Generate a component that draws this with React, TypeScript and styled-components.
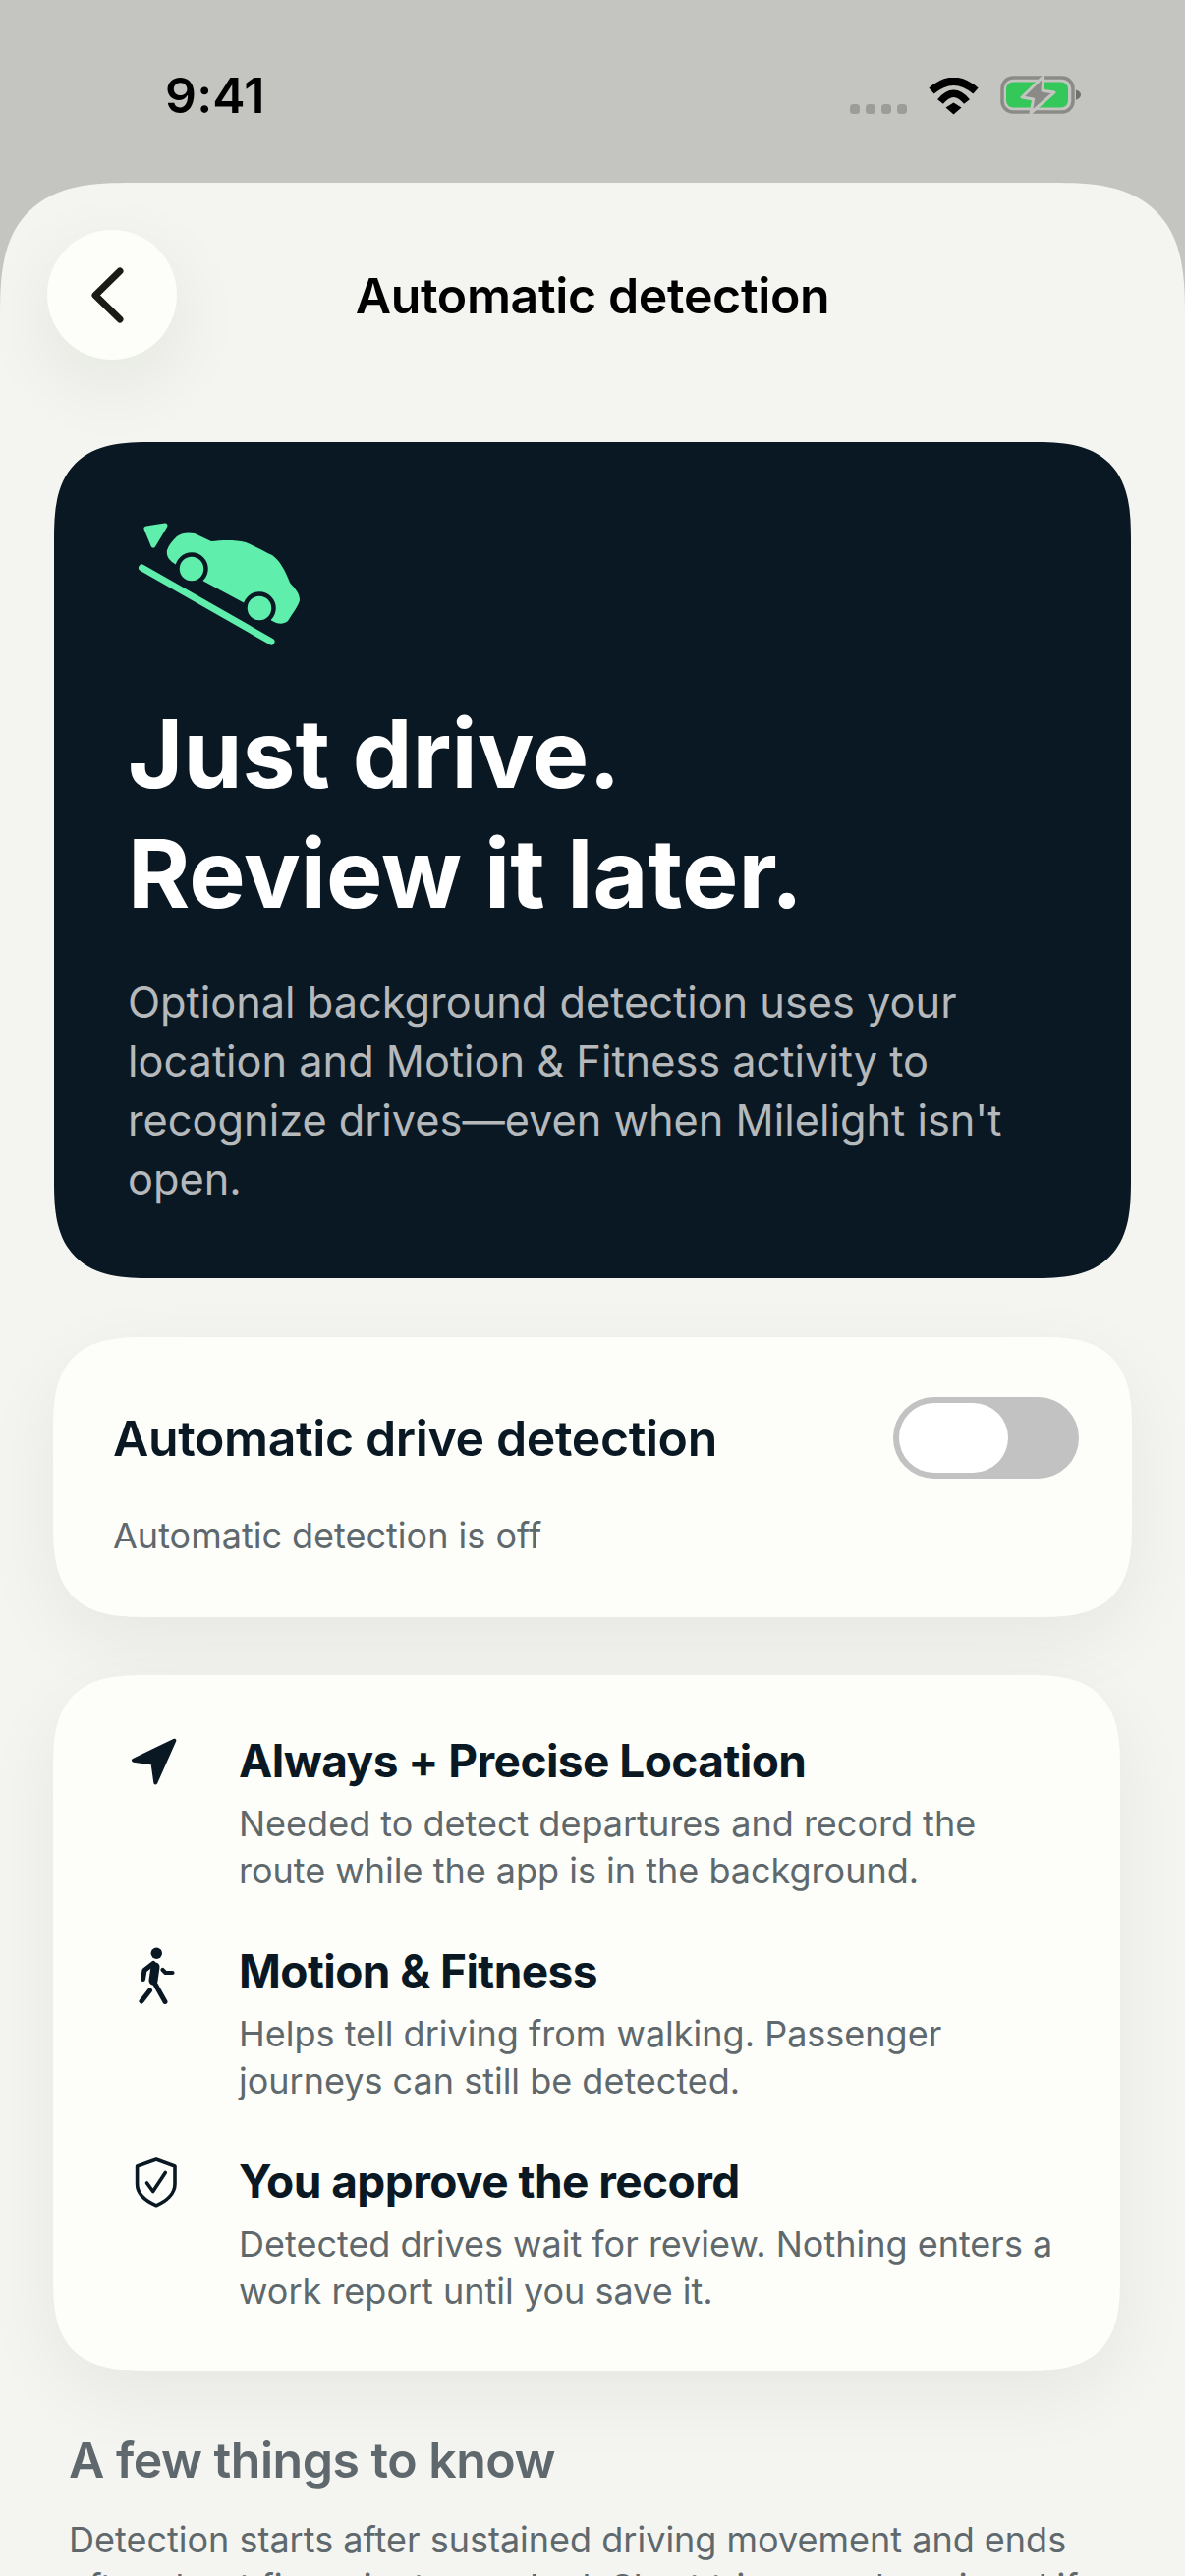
import React from "react";
import styled, { createGlobalStyle } from "styled-components";

const Global = createGlobalStyle`
  html, body { margin: 0; padding: 0; width: 1206px; height: 2622px; overflow: hidden; background: #c4c5c0; }
  * { box-sizing: border-box; }
  body { font-family: Inter, "Liberation Sans", sans-serif; -webkit-font-smoothing: antialiased; }
`;

const Screen = styled.div`
  width: 1206px; height: 2622px; overflow: hidden; background: #c4c5c0;
  display: flex; flex-direction: column;
`;
const StatusBar = styled.div`
  height: 186px; flex: none; display: flex; justify-content: space-between; align-items: flex-start;
  padding: 77px 106px 0 168px;
`;
const Clock = styled.div`
  font-size: 50px; font-weight: 600; line-height: 40px; color: #000; letter-spacing: 0.2px;
`;
const StatusIcons = styled.div`
  display: flex; align-items: flex-end; height: 39px; margin-top: 1px;
`;
const Dots = styled.div`
  display: flex; gap: 6px; margin-right: 22px; margin-bottom: 1px;
`;
const Dot = styled.span`
  width: 10px; height: 10px; border-radius: 3.5px; background: #9c9d98;
`;
const Wifi = styled.svg`
  width: 51px; height: 38px; margin-right: 22px; display: block;
`;
const Battery = styled.svg`
  width: 82px; height: 40px; display: block;
`;
const Sheet = styled.div`
  flex: 1; background: #f4f5f0; border-radius: 135px 135px 0 0; corner-shape: superellipse(1.5); padding: 48px 54px 0;
`;
const Header = styled.div`
  display: grid; grid-template-columns: 132px 1fr 132px; align-items: center; margin-left: -6px; margin-right: -6px;
`;
const BackButton = styled.button`
  width: 132px; height: 132px; border-radius: 50%; border: 0; background: #fdfef9; padding: 0;
  display: flex; align-items: center; justify-content: center;
  box-shadow: 0 24px 80px rgba(20, 25, 20, 0.07);
`;
const Title = styled.h1`
  margin: 0; text-align: center; font-size: 50px; line-height: 60px; font-weight: 600; color: #000; letter-spacing: -0.35px;
  position: relative; top: 1px;
`;
const Hero = styled.section`
  margin-top: 84px; margin-left: 1px; margin-right: 1px; background: #0a1824; border-radius: 100px; corner-shape: superellipse(1.5); padding: 50px 75px 71px;
`;
const CarIcon = styled.svg`
  display: block; width: 240px; height: 180px; margin-left: -20px;
`;
const Headline = styled.h2`
  margin: 26px 0 0; color: #fff; font-size: 96.5px; line-height: 122px; font-weight: 700; letter-spacing: 0;
`;
const HeroBody = styled.p`
  margin: 40px 0 0; color: #b5b9bb; font-size: 43.3px; line-height: 60px; font-weight: 400;
`;
const ToggleCard = styled.section`
  margin-top: 60px; background: #fdfef9; border-radius: 95px; corner-shape: superellipse(1.5); padding: 61px 54px 59px 61px;
  box-shadow: 0 24px 80px rgba(20, 25, 20, 0.06);
`;
const ToggleRow = styled.div`
  display: flex; align-items: center; justify-content: space-between;
`;
const CardTitle = styled.div`
  font-size: 50px; line-height: 60px; font-weight: 600; color: #0a1824; letter-spacing: -0.38px;
`;
const Subtle = styled.div`
  margin-top: 34px; font-size: 36px; line-height: 48px; color: #5f686c;
`;
const Toggle = styled.div`
  width: 189px; height: 83px; border-radius: 42px; background: #c2c2c2; padding: 6px; flex: none;
`;
const Knob = styled.div`
  width: 111px; height: 71px; border-radius: 36px; background: #fff;
`;
const InfoCard = styled.section`
  margin-top: 59px; margin-right: 12px; background: #fdfef9; border-radius: 95px; corner-shape: superellipse(1.5); padding: 57px 61px 57px 62px;
  display: flex; flex-direction: column; gap: 48px;
  box-shadow: 0 24px 80px rgba(20, 25, 20, 0.06);
`;
const InfoRow = styled.div`
  display: grid; grid-template-columns: 80px 1fr; column-gap: 47px;
`;
const InfoIcon = styled.svg`
  width: 80px; height: 80px; margin-top: -10px; display: block;
`;
const InfoTitle = styled.div`
  font-size: 46px; line-height: 60px; font-weight: 650; color: #0a1824; letter-spacing: -0.55px;
`;
const InfoDesc = styled.div`
  margin-top: 10px; font-size: 36px; line-height: 48px; color: #5f686c;
`;
const SectionTitle = styled.h3`
  margin: 59px 0 0 16px; font-size: 50px; line-height: 64px; font-weight: 600; color: #5f686c; letter-spacing: -0.5px;
`;
const SectionBody = styled.p`
  margin: 25px 0 0 16px; font-size: 36px; line-height: 48px; color: #5f686c;
`;

const rows = [
  {
    title: "Always + Precise Location",
    desc: "Needed to detect departures and record the route while the app is in the background.",
    viewBox: "16 12 80 80",
    icon: (
      <path
        d="M77.3 31.7 36 51.7 55.5 54.5 58.3 74.5Z"
        fill="#0a1824"
        stroke="#0a1824"
        strokeWidth="4"
        strokeLinejoin="round"
      />
    ),
  },
  {
    title: "Motion & Fitness",
    desc: "Helps tell driving from walking. Passenger journeys can still be detected.",
    viewBox: "16 6 80 80",
    icon: (
      <g fill="none" stroke="#0a1824" strokeLinecap="round" strokeLinejoin="round">
        <circle cx="59.3" cy="28.3" r="5.7" fill="#0a1824" stroke="none" />
        <path d="M58 42 56 56" strokeWidth="9" />
        <path d="M56 56 68 77.5" strokeWidth="5" />
        <path d="M52.5 66 44 77" strokeWidth="5" />
        <path d="M56 38.5 47 45.5 45.5 54.5" strokeWidth="5" />
        <path d="M65.5 45 68.5 48 75.5 48" strokeWidth="4.2" />
      </g>
    ),
  },
  {
    title: "You approve the record",
    desc: "Detected drives wait for review. Nothing enters a work report until you save it.",
    viewBox: "6 0 80 80",
    icon: (
      <g fill="none" stroke="#0a1824" strokeWidth="3.6" strokeLinecap="round" strokeLinejoin="round">
        <path d="M49 18 68 25V43C68 53 59 60.5 49 64.8 39 60.5 29.6 53 29.6 43V25Z" />
        <path d="M39.5 42 45.7 50.5 58.3 31.5" />
      </g>
    ),
  },
];

export default function App() {
  return (
    <Screen>
      <Global />
      <StatusBar>
        <Clock>9:41</Clock>
        <StatusIcons>
          <Dots>
            <Dot />
            <Dot />
            <Dot />
            <Dot />
          </Dots>
          <Wifi viewBox="0 0 51 38">
            <path d="M3 13.5Q25.5-6 48 13.5" fill="none" stroke="#000" strokeWidth="8" />
            <path d="M12 24.5Q25.5 8 39 24.5" fill="none" stroke="#000" strokeWidth="7.5" />
            <path d="M17.5 30.6 25.5 25.6 33.5 30.6 25.5 37.5Z" fill="#000" />
          </Wifi>
          <Battery viewBox="0 0 82 40">
            <rect x="2" y="2" width="72" height="35" rx="11" fill="none" stroke="#8a8b86" strokeWidth="3.5" />
            <rect x="6" y="6.5" width="63" height="26" rx="7" fill="#34c759" />
            <path d="M77 14.5C80 15.5 82 17 82 19.5S80 23.5 77 25Z" fill="#70716d" />
            <path
              d="M43.7 1 22 22 33.7 24 31 38 55 17 43 15.3Z"
              fill="#8a8b86"
              stroke="#c4c5c0"
              strokeWidth="3"
              strokeLinejoin="round"
            />
          </Battery>
        </StatusIcons>
      </StatusBar>
      <Sheet>
        <Header>
          <BackButton aria-label="Back">
            <svg width="132" height="132" viewBox="0 0 132 132">
              <path
                d="M74 42 49 66.5 74 91"
                fill="none"
                stroke="#1a1b15"
                strokeWidth="7"
                strokeLinecap="round"
                strokeLinejoin="round"
              />
            </svg>
          </BackButton>
          <Title>Automatic detection</Title>
          <span />
        </Header>
        <Hero>
          <CarIcon viewBox="0 0 240 180">
            <path d="M39 38 58 35 46 55Z" fill="#60eead" stroke="#60eead" strokeWidth="5" strokeLinejoin="round" />
            <path d="M34.5 78 166 153" fill="none" stroke="#60eead" strokeWidth="7" strokeLinecap="round" />
            <path
              d="M68 74C62 70 59 66 60 60 62 54 66 50 70 46 75 42 82 42 88 43L105 51C115 50 128 49 140 52 150 56 160 62 167 65 175 71 180 80 185 93 189 98 195 103 195 111 194 116 188 124 183 132 178 136 172 135 167 132L139 114 98 92Z"
              fill="#60eead"
            />
            <circle cx="85" cy="79" r="14.5" fill="#60eead" stroke="#0a1824" strokeWidth="4.5" />
            <circle cx="154" cy="119" r="14.5" fill="#60eead" stroke="#0a1824" strokeWidth="4.5" />
          </CarIcon>
          <Headline>
            Just drive.
            <br />
            Review it later.
          </Headline>
          <HeroBody>
            Optional background detection uses your location and Motion &amp; Fitness activity to recognize
            drives—even when Milelight isn't open.
          </HeroBody>
        </Hero>
        <ToggleCard>
          <ToggleRow>
            <CardTitle>Automatic drive detection</CardTitle>
            <Toggle>
              <Knob />
            </Toggle>
          </ToggleRow>
          <Subtle>Automatic detection is off</Subtle>
        </ToggleCard>
        <InfoCard>
          {rows.map((r) => (
            <InfoRow key={r.title}>
              <InfoIcon viewBox={r.viewBox}>{r.icon}</InfoIcon>
              <div>
                <InfoTitle>{r.title}</InfoTitle>
                <InfoDesc>{r.desc}</InfoDesc>
              </div>
            </InfoRow>
          ))}
        </InfoCard>
        <SectionTitle>A few things to know</SectionTitle>
        <SectionBody>
          Detection starts after sustained driving movement and ends after about five minutes parked. Short trips may
          be missed if they are brief.
        </SectionBody>
      </Sheet>
    </Screen>
  );
}
